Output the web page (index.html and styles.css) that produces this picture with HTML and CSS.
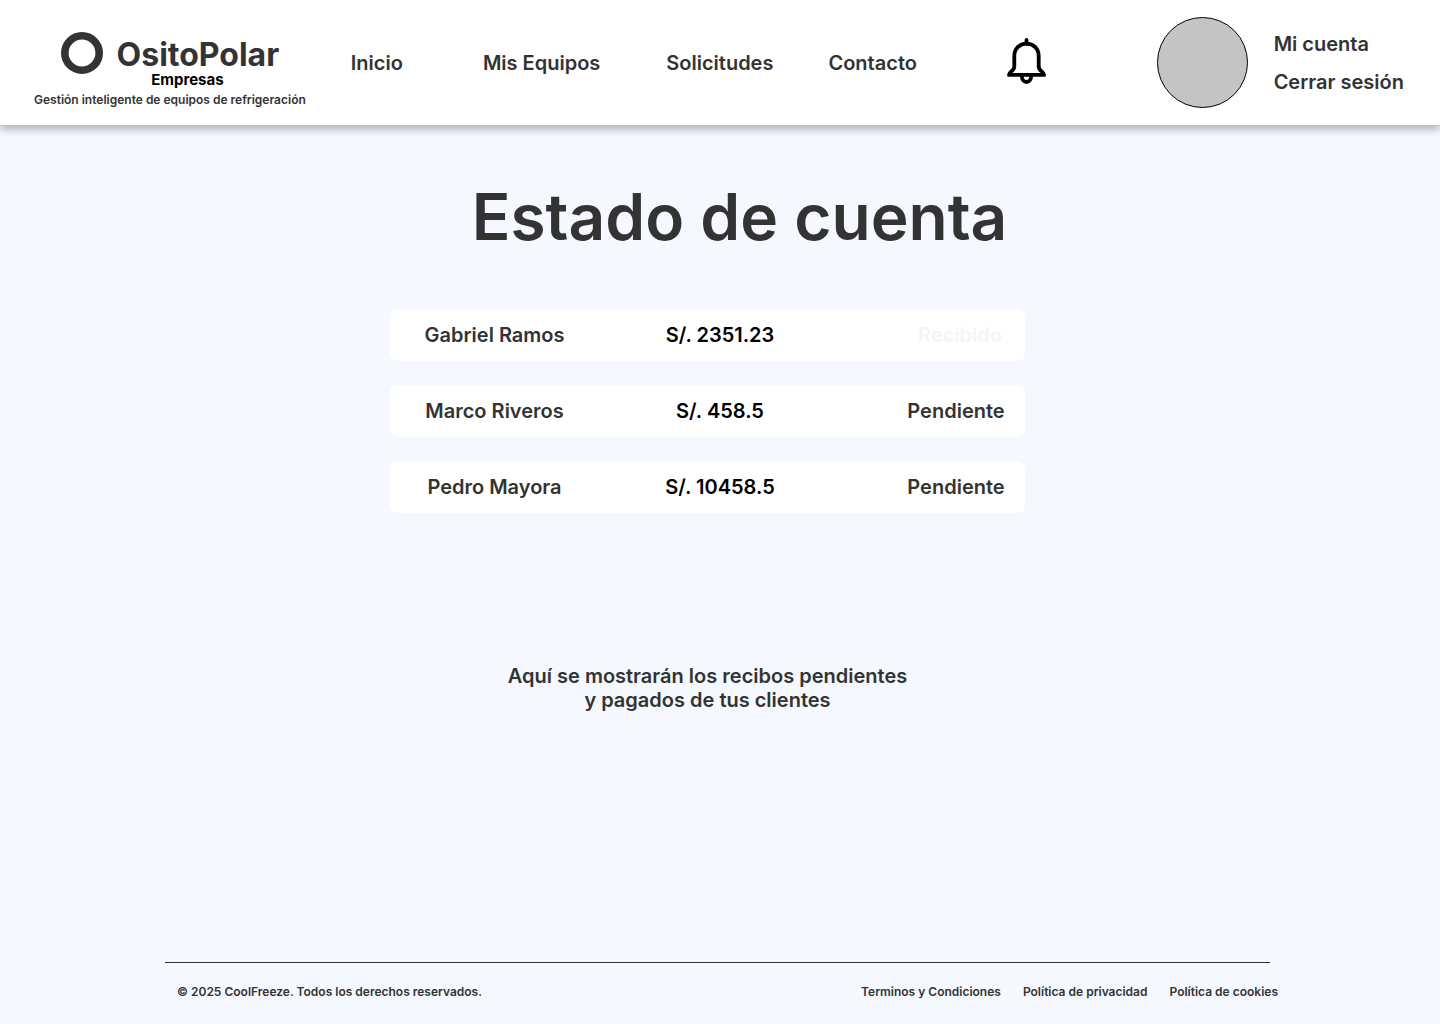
FILE: index.html
```html
<!DOCTYPE html>
<html lang="es">
<head>
<meta charset="utf-8">
<meta name="viewport" content="width=device-width, initial-scale=1">
<title>OsitoPolar Empresas - Estado de cuenta</title>
<link rel="stylesheet" href="styles.css">
</head>
<body>
<header class="header">
  <a class="brand" href="#">
    <span class="brand-row">
      <svg class="brand-logo" viewBox="0 0 42 42" aria-hidden="true"><circle cx="21" cy="21" r="17.2" fill="none" stroke="#333" stroke-width="7.6"/></svg>
      <span class="brand-name">OsitoPolar</span>
    </span>
    <span class="brand-sub">Empresas</span>
    <span class="brand-tagline">Gestión inteligente de equipos de refrigeración</span>
  </a>
  <nav class="nav" aria-label="Principal">
    <a class="nav-home" href="#">Inicio</a>
    <a class="nav-equipment" href="#">Mis Equipos</a>
    <a class="nav-requests" href="#">Solicitudes</a>
    <a href="#">Contacto</a>
  </nav>
  <button class="bell" type="button" aria-label="Notificaciones">
    <svg viewBox="0 0 42 52" fill="none" stroke="#000" stroke-width="3.8" stroke-linejoin="round" stroke-linecap="round" aria-hidden="true">
      <path d="M20.5 2.9V7M2.900 37.900h35.200c0-3.400-5.400-3.800-5.400-8.500V19C32.700 11.500 27.500 6.700 20.500 6.700S8.300 11.500 8.300 19v10.400c0 4.700-5.400 5.100-5.400 8.500z"/>
      <path d="M15.800 39c0 8 9.400 8 9.400 0"/>
    </svg>
  </button>
  <div class="account">
    <span class="avatar"></span>
    <div class="account-links">
      <a href="#">Mi cuenta</a>
      <a href="#">Cerrar sesión</a>
    </div>
  </div>
</header>
<main class="main">
  <h1 class="title">Estado de cuenta</h1>
  <table class="receipts">
    <tbody>
      <tr><td class="client">Gabriel Ramos</td><td class="amount">S/. 2351.23</td><td class="status received">Recibido</td></tr>
      <tr><td class="client">Marco Riveros</td><td class="amount">S/. 458.5</td><td class="status">Pendiente</td></tr>
      <tr><td class="client">Pedro Mayora</td><td class="amount">S/. 10458.5</td><td class="status">Pendiente</td></tr>
    </tbody>
  </table>
  <p class="note">Aquí se mostrarán los recibos pendientes<br>y pagados de tus clientes</p>
</main>
<footer class="footer">
  <div class="footer-row">
    <p class="copyright">© 2025 CoolFreeze. Todos los derechos reservados.</p>
    <nav class="legal" aria-label="Legal">
      <a href="#">Terminos y Condiciones</a>
      <a href="#">Política de privacidad</a>
      <a href="#">Política de cookies</a>
    </nav>
  </div>
</footer>
</body>
</html>
```
FILE: styles.css
```css
* {
  box-sizing: border-box;
}

body {
  margin: 0;
  min-height: 100vh;
  display: flex;
  flex-direction: column;
  background: #f5f8ff;
  color: #333;
  font-family: Inter, "Liberation Sans", sans-serif;
  font-size: 20px;
  font-weight: 600;
  line-height: 24px;
}

a {
  color: inherit;
  text-decoration: none;
}

.header {
  display: flex;
  align-items: center;
  min-height: 125px;
  padding: 0 36px 0 34px;
  background: #fff;
  box-shadow: 0 4px 8px rgba(0, 0, 0, 0.3);
}

.brand {
  display: flex;
  flex-direction: column;
  align-items: center;
  padding-top: 19px;
  white-space: nowrap;
}

.brand-row {
  display: flex;
  align-items: flex-end;
  gap: 14px;
}

.brand-logo {
  width: 42px;
  height: 42px;
}

.brand-name {
  font-size: 32px;
  font-weight: 700;
  line-height: 38px;
}

.brand-sub {
  padding-left: 35px;
  color: #000;
  font-size: 15px;
  font-weight: 700;
  line-height: 12px;
}

.brand-tagline {
  padding-top: 2px;
  font-size: 12px;
  line-height: 24px;
}

.nav {
  display: flex;
  padding-left: 45px;
  white-space: nowrap;
}

.nav-home {
  padding-right: 80px;
}

.nav-equipment {
  padding-right: 66px;
}

.nav-requests {
  padding-right: 55px;
}

.bell {
  width: 42px;
  height: 52px;
  margin-left: 89px;
  padding: 0;
  border: 0;
  background: none;
}

.bell svg {
  display: block;
  width: 42px;
  height: 52px;
}

.account {
  display: flex;
  align-items: center;
  gap: 26px;
  margin-left: auto;
  white-space: nowrap;
}

.avatar {
  width: 91px;
  height: 91px;
  border: 1px solid #000;
  border-radius: 50%;
  background: #c4c4c4;
}

.account-links {
  display: flex;
  flex-direction: column;
  gap: 14px;
}

.main {
  flex: 1;
  display: flex;
  flex-direction: column;
  align-items: center;
  padding: 52px 25px 0 0;
}

.title {
  margin: 0;
  padding-left: 64px;
  font-size: 64px;
  font-weight: 600;
  line-height: 80px;
}

.receipts {
  width: 635px;
  margin-top: 28px;
  border-spacing: 0 24px;
  table-layout: fixed;
}

.receipts td {
  height: 52px;
  padding: 0;
  background: #fff;
  text-align: center;
}

.receipts .client {
  width: 209px;
  border-radius: 8px 0 0 8px;
}

.receipts .amount {
  color: #000;
}

.receipts .status {
  width: 184px;
  padding-left: 46px;
  border-radius: 0 8px 8px 0;
}

.receipts .received {
  padding-left: 54px;
  color: #f5f5f5;
}

.note {
  margin: 127px 0 0;
  text-align: center;
}

.footer {
  padding: 0 170px 0 165px;
  font-size: 12px;
  line-height: 20px;
}

.footer-row {
  display: flex;
  justify-content: space-between;
  padding: 19px 0 22px 12px;
  border-top: 1px solid #333;
}

.copyright {
  margin: 0;
}

.legal {
  display: flex;
  gap: 22px;
  margin-right: -8px;
}
```
